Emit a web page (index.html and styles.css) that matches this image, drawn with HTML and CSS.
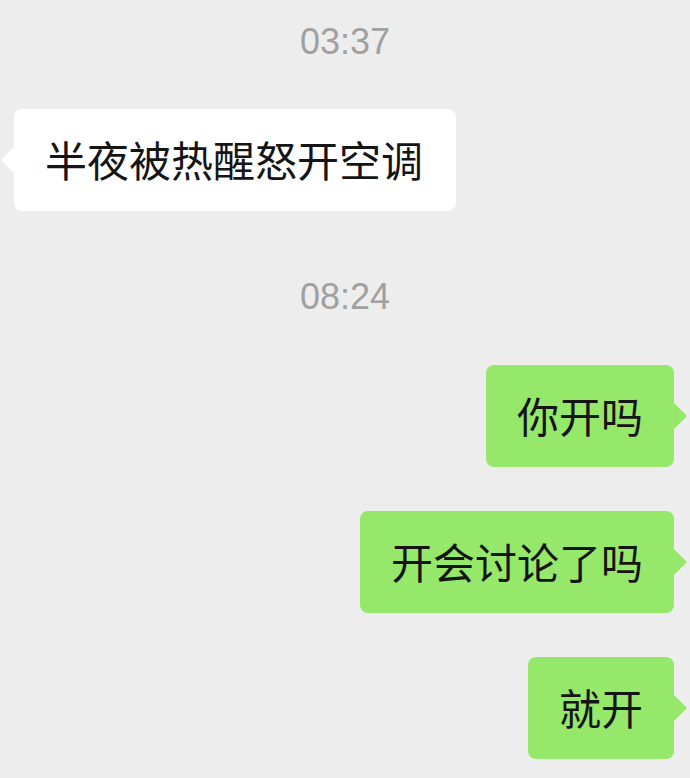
FILE: index.html
```html
<!DOCTYPE html>
<html lang="zh-CN">
<head>
    <meta charset="UTF-8">
    <meta name="viewport" content="width=device-width, initial-scale=1.0">
    <title>聊天</title>
    <link rel="stylesheet" href="styles.css">
</head>
<body>

<div class="chat">
    <div class="time time-first">03:37</div>

    <div class="row row-left">
        <div class="bubble bubble-white">半夜被热醒怒开空调</div>
    </div>

    <div class="time time-second">08:24</div>

    <div class="row row-right">
        <div class="bubble bubble-green">你开吗</div>
    </div>

    <div class="row row-right">
        <div class="bubble bubble-green">开会讨论了吗</div>
    </div>

    <div class="row row-right">
        <div class="bubble bubble-green">就开</div>
    </div>
</div>

</body>
</html>
```

FILE: styles.css
```css
body {
    margin: 0;
    padding: 0;
    background-color: #ededed;
    font-family: "Noto Sans CJK SC", "Noto Sans", sans-serif;
}
.chat {
    display: flex;
    flex-direction: column;
    padding: 20px 16px 0 14px;
}
.time {
    text-align: center;
    font-family: "Liberation Sans", Arial, sans-serif;
    font-size: 36px;
    line-height: 44px;
    color: #a0a0a0;
    padding-left: 2px;
}
.time-first {
    margin-bottom: 45px;
}
.time-second {
    margin-top: 64px;
    margin-bottom: 46px;
}
.row {
    display: flex;
}
.row-right {
    justify-content: flex-end;
}
.row-right + .row-right {
    margin-top: 44px;
}
.bubble {
    position: relative;
    font-size: 42px;
    line-height: 42px;
    padding: 29px 31px 31px 31px;
    border-radius: 8px;
    color: #151515;
}
.bubble-white {
    background-color: #ffffff;
    padding-right: 33px;
}
.bubble-green {
    background-color: #95e86a;
}
.bubble::before {
    content: "";
    position: absolute;
    top: 50%;
    margin-top: -13px;
    border-top: 13px solid transparent;
    border-bottom: 13px solid transparent;
}
.bubble-white::before {
    left: -13px;
    border-right: 13px solid #ffffff;
}
.bubble-green::before {
    right: -13px;
    border-left: 13px solid #95e86a;
}
```
